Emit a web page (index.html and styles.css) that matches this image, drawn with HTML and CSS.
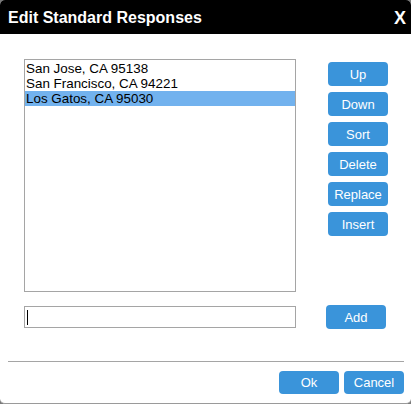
FILE: index.html
```html
<!DOCTYPE html>
<html>
<head>
<meta charset="utf-8">
<link rel="stylesheet" href="styles.css">
</head>
<body>
<div class="dialog">
  <div class="titlebar">
    <span class="title">Edit Standard Responses</span>
    <span class="close">X</span>
  </div>
  <div class="content">
    <div class="main">
      <div class="list">
        <div class="item">San Jose, CA 95138</div>
        <div class="item">San Francisco, CA 94221</div>
        <div class="item selected">Los Gatos, CA 95030</div>
      </div>
      <div class="side">
        <button class="btn">Up</button>
        <button class="btn">Down</button>
        <button class="btn">Sort</button>
        <button class="btn">Delete</button>
        <button class="btn">Replace</button>
        <button class="btn">Insert</button>
      </div>
    </div>
    <div class="addrow">
      <div class="input"><span class="caret"></span></div>
      <button class="btn add">Add</button>
    </div>
  </div>
  <div class="footer">
    <button class="btn foot">Ok</button>
    <button class="btn foot">Cancel</button>
  </div>
</div>
</body>
</html>
```

FILE: styles.css
```css
html, body {
  margin: 0;
  padding: 0;
  background: #7a7a7a;
}
body {
  width: 411px;
  height: 404px;
  font-family: "Liberation Sans", Arial, sans-serif;
}
.dialog {
  width: 411px;
  height: 404px;
  box-sizing: border-box;
  background: #fff;
  border-radius: 5px;
  overflow: hidden;
  display: flex;
  flex-direction: column;
  border-bottom: 1px solid #9a9a9a;
}
.titlebar {
  height: 34px;
  background: #000;
  color: #fff;
  display: flex;
  align-items: center;
  justify-content: space-between;
  padding: 0 5px 0 8px;
  flex-shrink: 0;
}
.title {
  font-weight: bold;
  font-size: 16px;
  margin-top: 1px;
}
.close {
  font-weight: bold;
  font-size: 18px;
  margin-top: 2px;
}
.content {
  padding: 25px 0 0 24px;
  flex: 1;
}
.main {
  display: flex;
  gap: 32px;
  align-items: flex-start;
}
.list {
  width: 272px;
  height: 233px;
  box-sizing: border-box;
  border: 1px solid #a5a5a5;
  padding-top: 1px;
}
.item {
  font-size: 13.4px;
  line-height: 15px;
  height: 15px;
  padding-left: 1px;
  color: #000;
}
.item.selected {
  background: #72b2ee;
}
.side {
  display: flex;
  flex-direction: column;
  gap: 6px;
  margin-top: 3px;
}
.btn {
  width: 60px;
  height: 24px;
  border: none;
  border-radius: 4px;
  background: #3a94da;
  color: #fff;
  font-family: "Liberation Sans", Arial, sans-serif;
  font-size: 13px;
  padding: 0;
  display: flex;
  align-items: center;
  justify-content: center;
}
.addrow {
  display: flex;
  align-items: center;
  gap: 30px;
  margin-top: 13px;
}
.input {
  width: 272px;
  height: 22px;
  box-sizing: border-box;
  border: 1px solid #a5a5a5;
  display: flex;
  align-items: center;
  padding-left: 2px;
}
.caret {
  width: 1px;
  height: 15px;
  background: #000;
}
.footer {
  margin: 0 7px 9px 8px;
  border-top: 1px solid #a5a5a5;
  padding-top: 9px;
  display: flex;
  justify-content: flex-end;
  gap: 5px;
}
.btn.foot {
  height: 23px;
}
```
